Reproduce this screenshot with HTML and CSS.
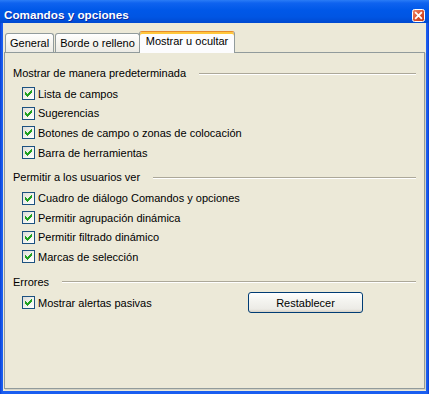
FILE: index.html
```html
<!DOCTYPE html>
<html lang="es">
<head>
<meta charset="utf-8">
<title>Comandos y opciones</title>
<link rel="stylesheet" href="styles.css">
</head>
<body>
<div class="window">
  <div class="titlebar">
    <span class="title">Comandos y opciones</span>
    <span class="close" aria-label="Cerrar">
      <svg width="13" height="13" viewBox="0 0 13 13">
        <defs>
          <linearGradient id="cg" x1="0" y1="0" x2="1" y2="1">
            <stop offset="0" stop-color="#f08d6f"/>
            <stop offset="0.5" stop-color="#db5431"/>
            <stop offset="1" stop-color="#c13818"/>
          </linearGradient>
        </defs>
        <rect x="0.5" y="0.5" width="12" height="12" rx="2" fill="url(#cg)" stroke="#ffffff"/>
        <path d="M3.8 3.8L9.2 9.2M9.2 3.8L3.8 9.2" stroke="#ffffff" stroke-width="1.8" stroke-linecap="square"/>
      </svg>
    </span>
  </div>
  <div class="client">
    <div class="tabs">
      <div class="tab">General</div>
      <div class="tab">Borde o relleno</div>
      <div class="tab active">Mostrar u ocultar</div>
    </div>
    <div class="panel">
      <section class="group">
        <div class="group-title"><span>Mostrar de manera predeterminada</span><span class="rule"></span></div>
        <div class="rows">
          <label class="check"><span class="box"><svg width="7" height="7" viewBox="0 0 7 7"><path d="M0 2h1v3H0zM1 3h1v3H1zM2 4h1v3H2zM3 3h1v3H3zM4 2h1v3H4zM5 1h1v3H5zM6 0h1v3H6z" fill="#21a121"/></svg></span>Lista de campos</label>
          <label class="check"><span class="box"><svg width="7" height="7" viewBox="0 0 7 7"><path d="M0 2h1v3H0zM1 3h1v3H1zM2 4h1v3H2zM3 3h1v3H3zM4 2h1v3H4zM5 1h1v3H5zM6 0h1v3H6z" fill="#21a121"/></svg></span>Sugerencias</label>
          <label class="check"><span class="box"><svg width="7" height="7" viewBox="0 0 7 7"><path d="M0 2h1v3H0zM1 3h1v3H1zM2 4h1v3H2zM3 3h1v3H3zM4 2h1v3H4zM5 1h1v3H5zM6 0h1v3H6z" fill="#21a121"/></svg></span>Botones de campo o zonas de colocación</label>
          <label class="check"><span class="box"><svg width="7" height="7" viewBox="0 0 7 7"><path d="M0 2h1v3H0zM1 3h1v3H1zM2 4h1v3H2zM3 3h1v3H3zM4 2h1v3H4zM5 1h1v3H5zM6 0h1v3H6z" fill="#21a121"/></svg></span>Barra de herramientas</label>
        </div>
      </section>
      <section class="group">
        <div class="group-title"><span>Permitir a los usuarios ver</span><span class="rule"></span></div>
        <div class="rows">
          <label class="check"><span class="box"><svg width="7" height="7" viewBox="0 0 7 7"><path d="M0 2h1v3H0zM1 3h1v3H1zM2 4h1v3H2zM3 3h1v3H3zM4 2h1v3H4zM5 1h1v3H5zM6 0h1v3H6z" fill="#21a121"/></svg></span>Cuadro de diálogo Comandos y opciones</label>
          <label class="check"><span class="box"><svg width="7" height="7" viewBox="0 0 7 7"><path d="M0 2h1v3H0zM1 3h1v3H1zM2 4h1v3H2zM3 3h1v3H3zM4 2h1v3H4zM5 1h1v3H5zM6 0h1v3H6z" fill="#21a121"/></svg></span>Permitir agrupación dinámica</label>
          <label class="check"><span class="box"><svg width="7" height="7" viewBox="0 0 7 7"><path d="M0 2h1v3H0zM1 3h1v3H1zM2 4h1v3H2zM3 3h1v3H3zM4 2h1v3H4zM5 1h1v3H5zM6 0h1v3H6z" fill="#21a121"/></svg></span>Permitir filtrado dinámico</label>
          <label class="check"><span class="box"><svg width="7" height="7" viewBox="0 0 7 7"><path d="M0 2h1v3H0zM1 3h1v3H1zM2 4h1v3H2zM3 3h1v3H3zM4 2h1v3H4zM5 1h1v3H5zM6 0h1v3H6z" fill="#21a121"/></svg></span>Marcas de selección</label>
        </div>
      </section>
      <section class="group">
        <div class="group-title"><span>Errores</span><span class="rule"></span></div>
        <div class="rows">
          <div class="action-row">
            <label class="check wide"><span class="box"><svg width="7" height="7" viewBox="0 0 7 7"><path d="M0 2h1v3H0zM1 3h1v3H1zM2 4h1v3H2zM3 3h1v3H3zM4 2h1v3H4zM5 1h1v3H5zM6 0h1v3H6z" fill="#21a121"/></svg></span>Mostrar alertas pasivas</label>
            <button class="btn" type="button">Restablecer</button>
          </div>
        </div>
      </section>
    </div>
  </div>
</div>
</body>
</html>
```

FILE: styles.css
```css
* { box-sizing: border-box; }
html, body { margin: 0; padding: 0; }
body {
  width: 429px;
  height: 394px;
  overflow: hidden;
  font-family: "Liberation Sans", Arial, sans-serif;
  font-size: 11px;
  color: #000;
  background: #ece9d8;
}
.window {
  width: 429px;
  height: 394px;
  display: flex;
  flex-direction: column;
  background: linear-gradient(to right, #0a3fd4 0, #1a5ef0 2px, #1a5ef0 427px, #0a3fd4 429px);
}
.titlebar {
  flex: none;
  height: 23px;
  display: flex;
  align-items: center;
  padding: 7px 4px 0 4px;
  background: linear-gradient(to bottom, #2a7cf6 0, #0f63ef 3px, #0058e8 10px, #0055e3 17px, #0049d0 23px);
}
.title {
  flex: 1;
  color: #fff;
  font-weight: bold;
  font-size: 11.7px;
  line-height: 14px;
  text-shadow: 1px 1px 0 #0b2aa0;
}
.close {
  width: 13px;
  height: 13px;
  display: block;
}
.close svg { display: block; }
.client {
  flex: 1;
  margin: 0 3px 3px 3px;
  padding: 8px 1px 2px 1px;
  background: #ece9d8;
  display: flex;
  flex-direction: column;
}
.tabs {
  flex: none;
  display: flex;
  align-items: flex-end;
  padding-left: 1px;
}
.tab {
  height: 19px;
  padding: 0 4px;
  margin-right: 1px;
  line-height: 18px;
  border: 1px solid #919b9c;
  border-bottom: none;
  border-radius: 3px 3px 0 0;
  background: linear-gradient(to bottom, #ffffff 0, #f6f5f0 50%, #ecebe5 100%);
  white-space: nowrap;
}
.tab.active {
  position: relative;
  z-index: 1;
  height: 22px;
  margin: 0 0 -1px -2px;
  padding: 0 6px;
  line-height: 14px;
  border-top: 1px solid #e68b2c;
  box-shadow: inset 0 2px 0 #ffc73c;
  padding-top: 2px;
  background: #fcfcfe;
}
.panel {
  flex: 1;
  border: 1px solid #919b9c;
  box-shadow: 1px 1px 0 #d6d3c4;
  background: #ece9d8;
  padding: 14px 8px 0 8px;
}
.group + .group { margin-top: 9px; }
.group-title {
  display: flex;
  align-items: center;
  height: 13px;
  line-height: 13px;
  white-space: nowrap;
}
.rule {
  flex: 1;
  height: 2px;
  margin-left: 13px;
  border-top: 1px solid #aca899;
  border-bottom: 1px solid #ffffff;
}
.rows {
  margin-top: 4px;
  padding-left: 9px;
}
.check {
  display: flex;
  align-items: center;
  height: 19.6px;
  white-space: nowrap;
}
.check.wide { width: 226px; }
.box {
  flex: none;
  width: 13px;
  height: 13px;
  margin-right: 3px;
  border: 1px solid #1c5180;
  background: linear-gradient(135deg, #dcdcd7 0%, #f4f4f0 60%, #ffffff 100%);
  display: flex;
  align-items: center;
  justify-content: center;
}
.box svg { display: block; }
.action-row {
  display: flex;
  align-items: center;
  height: 19.6px;
}
.btn {
  flex: none;
  width: 115px;
  height: 21px;
  padding: 0;
  font-family: "Liberation Sans", Arial, sans-serif;
  font-size: 11px;
  color: #000;
  border: 1px solid #003c74;
  border-radius: 3px;
  background: linear-gradient(to bottom, #ffffff 0, #f4f4f0 40%, #ecebe6 85%, #d6d0c5 100%);
}
```
